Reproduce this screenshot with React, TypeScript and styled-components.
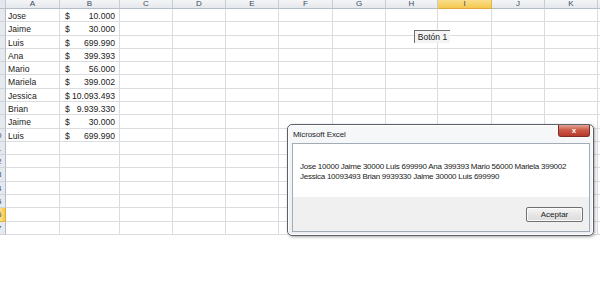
import styled, { createGlobalStyle } from "styled-components";

const GlobalStyle = createGlobalStyle`
  html, body {
    margin: 0;
    padding: 0;
    background: #ffffff;
  }
  body {
    font-family: "Liberation Sans", Arial, sans-serif;
  }
`;

const columns = [
  { name: "A", w: 54 },
  { name: "B", w: 60 },
  { name: "C", w: 53 },
  { name: "D", w: 53 },
  { name: "E", w: 53 },
  { name: "F", w: 54 },
  { name: "G", w: 53 },
  { name: "H", w: 52 },
  { name: "I", w: 54 },
  { name: "J", w: 53 },
  { name: "K", w: 53 },
  { name: "", w: 20 },
];

const data = [
  ["Jose", "10.000"],
  ["Jaime", "30.000"],
  ["Luis", "699.990"],
  ["Ana", "399.393"],
  ["Mario", "56.000"],
  ["Mariela", "399.002"],
  ["Jessica", "10.093.493"],
  ["Brian", "9.939.330"],
  ["Jaime", "30.000"],
  ["Luis", "699.990"],
];

const ROWS = 17;
const ACTIVE_ROW = 16;
const ACTIVE_COL = "I";

// alturas de fila (~13.3px) redondeadas para que las líneas queden nítidas
const rowHeight = (i: number) =>
  Math.round(9 + 13.29 * (i + 1)) - Math.round(9 + 13.29 * i);

const App = () => {
  return (
    <Page>
      <GlobalStyle />
      <Sheet>
        <HeaderRow>
          <Corner />
          {columns.map((c) => (
            <ColHead key={c.name || "x"} $w={c.w} $active={c.name === ACTIVE_COL}>
              {c.name}
            </ColHead>
          ))}
        </HeaderRow>

        {Array.from({ length: ROWS }).map((_, i) => {
          const row = data[i];
          return (
            <Row key={i} $h={rowHeight(i)}>
              <RowHead $active={i + 1 === ACTIVE_ROW}>
                <RowNum>{i + 1}</RowNum>
              </RowHead>
              {columns.map((c) => {
                if (c.name === "A")
                  return (
                    <Cell key={c.name} $w={c.w}>
                      {row?.[0]}
                    </Cell>
                  );
                if (c.name === "B")
                  return (
                    <Cell key={c.name} $w={c.w}>
                      {row && (
                        <Money>
                          <span>$</span>
                          <span>{row[1]}</span>
                        </Money>
                      )}
                    </Cell>
                  );
                return <Cell key={c.name || "x"} $w={c.w} />;
              })}
            </Row>
          );
        })}
      </Sheet>

      <FormButton>Botón 1</FormButton>

      <Dialog>
        <TitleBar>
          <Title>Microsoft Excel</Title>
          <CloseBtn>x</CloseBtn>
        </TitleBar>
        <Panel>
          <Message>
            Jose 10000 Jaime 30000 Luis 699990 Ana 399393 Mario 56000 Mariela 399002
            <br />
            Jessica 10093493 Brian 9939330 Jaime 30000 Luis 699990
          </Message>
          <Footer>
            <OkButton>Aceptar</OkButton>
          </Footer>
        </Panel>
      </Dialog>
    </Page>
  );
};

export default App;

const Page = styled.div`
  position: relative;
  width: 600px;
  height: 305px;
  overflow: hidden;
  background: #ffffff;
`;

const Sheet = styled.div`
  display: flex;
  flex-direction: column;
  font-size: 8.6px;
  color: #222;
`;

const HeaderRow = styled.div`
  display: flex;
  height: 9px;
`;

const Corner = styled.div`
  width: 6px;
  flex-shrink: 0;
  box-sizing: border-box;
  background: #e4e8ee;
  border-right: 1px solid #c5cad2;
  border-bottom: 1px solid #b9c0ca;
`;

const ColHead = styled.div<{ $w: number; $active?: boolean }>`
  width: ${(p) => p.$w}px;
  flex-shrink: 0;
  box-sizing: border-box;
  display: flex;
  align-items: flex-end;
  justify-content: center;
  line-height: 8px;
  font-size: 8px;
  color: #3c4a5c;
  background: ${(p) =>
    p.$active
      ? "linear-gradient(#f9de8a, #f5c84e)"
      : "linear-gradient(#f4f5f7, #e5e8ec)"};
  border-right: 1px solid ${(p) => (p.$active ? "#e2b53d" : "#c8ced6")};
  border-bottom: 1px solid ${(p) => (p.$active ? "#e2a83a" : "#b4bcc7")};
  overflow: hidden;
`;

const Row = styled.div<{ $h: number }>`
  display: flex;
  height: ${(p) => p.$h}px;
`;

const RowHead = styled.div<{ $active?: boolean }>`
  width: 6px;
  flex-shrink: 0;
  box-sizing: border-box;
  display: flex;
  justify-content: flex-end;
  align-items: center;
  overflow: hidden;
  background: ${(p) =>
    p.$active ? "linear-gradient(90deg, #f9de8a, #f5c84e)" : "#e6e9ee"};
  border-right: 1px solid ${(p) => (p.$active ? "#e2a83a" : "#b4bcc7")};
  border-bottom: 1px solid ${(p) => (p.$active ? "#e2b53d" : "#cfd4db")};
`;

const RowNum = styled.span`
  width: 16px;
  flex-shrink: 0;
  text-align: center;
  font-size: 8px;
  color: #3c4a5c;
`;

const Cell = styled.div<{ $w: number }>`
  width: ${(p) => p.$w}px;
  flex-shrink: 0;
  box-sizing: border-box;
  display: flex;
  align-items: center;
  padding: 1px 2px 0 2px;
  border-right: 1px solid #dadcdf;
  border-bottom: 1px solid #dadcdf;
  white-space: nowrap;
  overflow: hidden;
`;

const Money = styled.div`
  flex: 1;
  display: flex;
  justify-content: space-between;
  padding: 0 2px 0 3px;
`;

const FormButton = styled.div`
  position: absolute;
  left: 414px;
  top: 30px;
  width: 36px;
  height: 13px;
  box-sizing: border-box;
  display: flex;
  align-items: center;
  justify-content: center;
  background: #f3f3f3;
  border-left: 1px solid #6f6f6f;
  border-top: 1px solid #6f6f6f;
  font-size: 8.5px;
  color: #222;
  white-space: nowrap;
`;

const Dialog = styled.div`
  position: absolute;
  left: 287px;
  top: 124px;
  width: 307px;
  height: 112px;
  box-sizing: border-box;
  display: flex;
  flex-direction: column;
  padding: 0 3px 3px 4px;
  background: linear-gradient(#f7f8fa, #eceef1);
  border: 1px solid #5c626b;
  border-radius: 5px;
  box-shadow: 1px 1px 3px rgba(0, 0, 0, 0.35), inset 0 0 0 1px #ffffff;
`;

const TitleBar = styled.div`
  height: 18px;
  display: flex;
  justify-content: space-between;
  align-items: flex-start;
`;

const Title = styled.div`
  padding: 5px 0 0 1px;
  font-size: 8px;
  letter-spacing: -0.1px;
  color: #1e1e1e;
  white-space: nowrap;
`;

const CloseBtn = styled.div`
  width: 32px;
  height: 12px;
  box-sizing: border-box;
  display: flex;
  align-items: center;
  justify-content: center;
  background: linear-gradient(#e2a596, #cc5a46 45%, #b8392a);
  border: 1px solid #7d2f28;
  border-top: none;
  border-radius: 0 0 3px 3px;
  color: #ffffff;
  font-size: 8px;
  font-weight: bold;
  line-height: 1;
`;

const Panel = styled.div`
  flex: 1;
  display: flex;
  flex-direction: column;
  border: 1px solid #a3abb5;
`;

const Message = styled.div`
  height: 53px;
  box-sizing: border-box;
  padding: 18px 0 0 7px;
  background: #ffffff;
  font-size: 8px;
  letter-spacing: -0.25px;
  line-height: 10px;
  color: #1a1a1a;
  white-space: nowrap;
`;

const Footer = styled.div`
  flex: 1;
  display: flex;
  justify-content: flex-end;
  align-items: center;
  padding-right: 6px;
  background: #f0f0f0;
`;

const OkButton = styled.div`
  width: 57px;
  height: 15px;
  box-sizing: border-box;
  display: flex;
  align-items: center;
  justify-content: center;
  border: 1px solid #707070;
  border-radius: 2px;
  background: linear-gradient(#f5f5f5, #e6e6e6 50%, #dcdcdc);
  box-shadow: inset 0 0 0 1px #fbfbfb;
  font-size: 8px;
  color: #1a1a1a;
`;
